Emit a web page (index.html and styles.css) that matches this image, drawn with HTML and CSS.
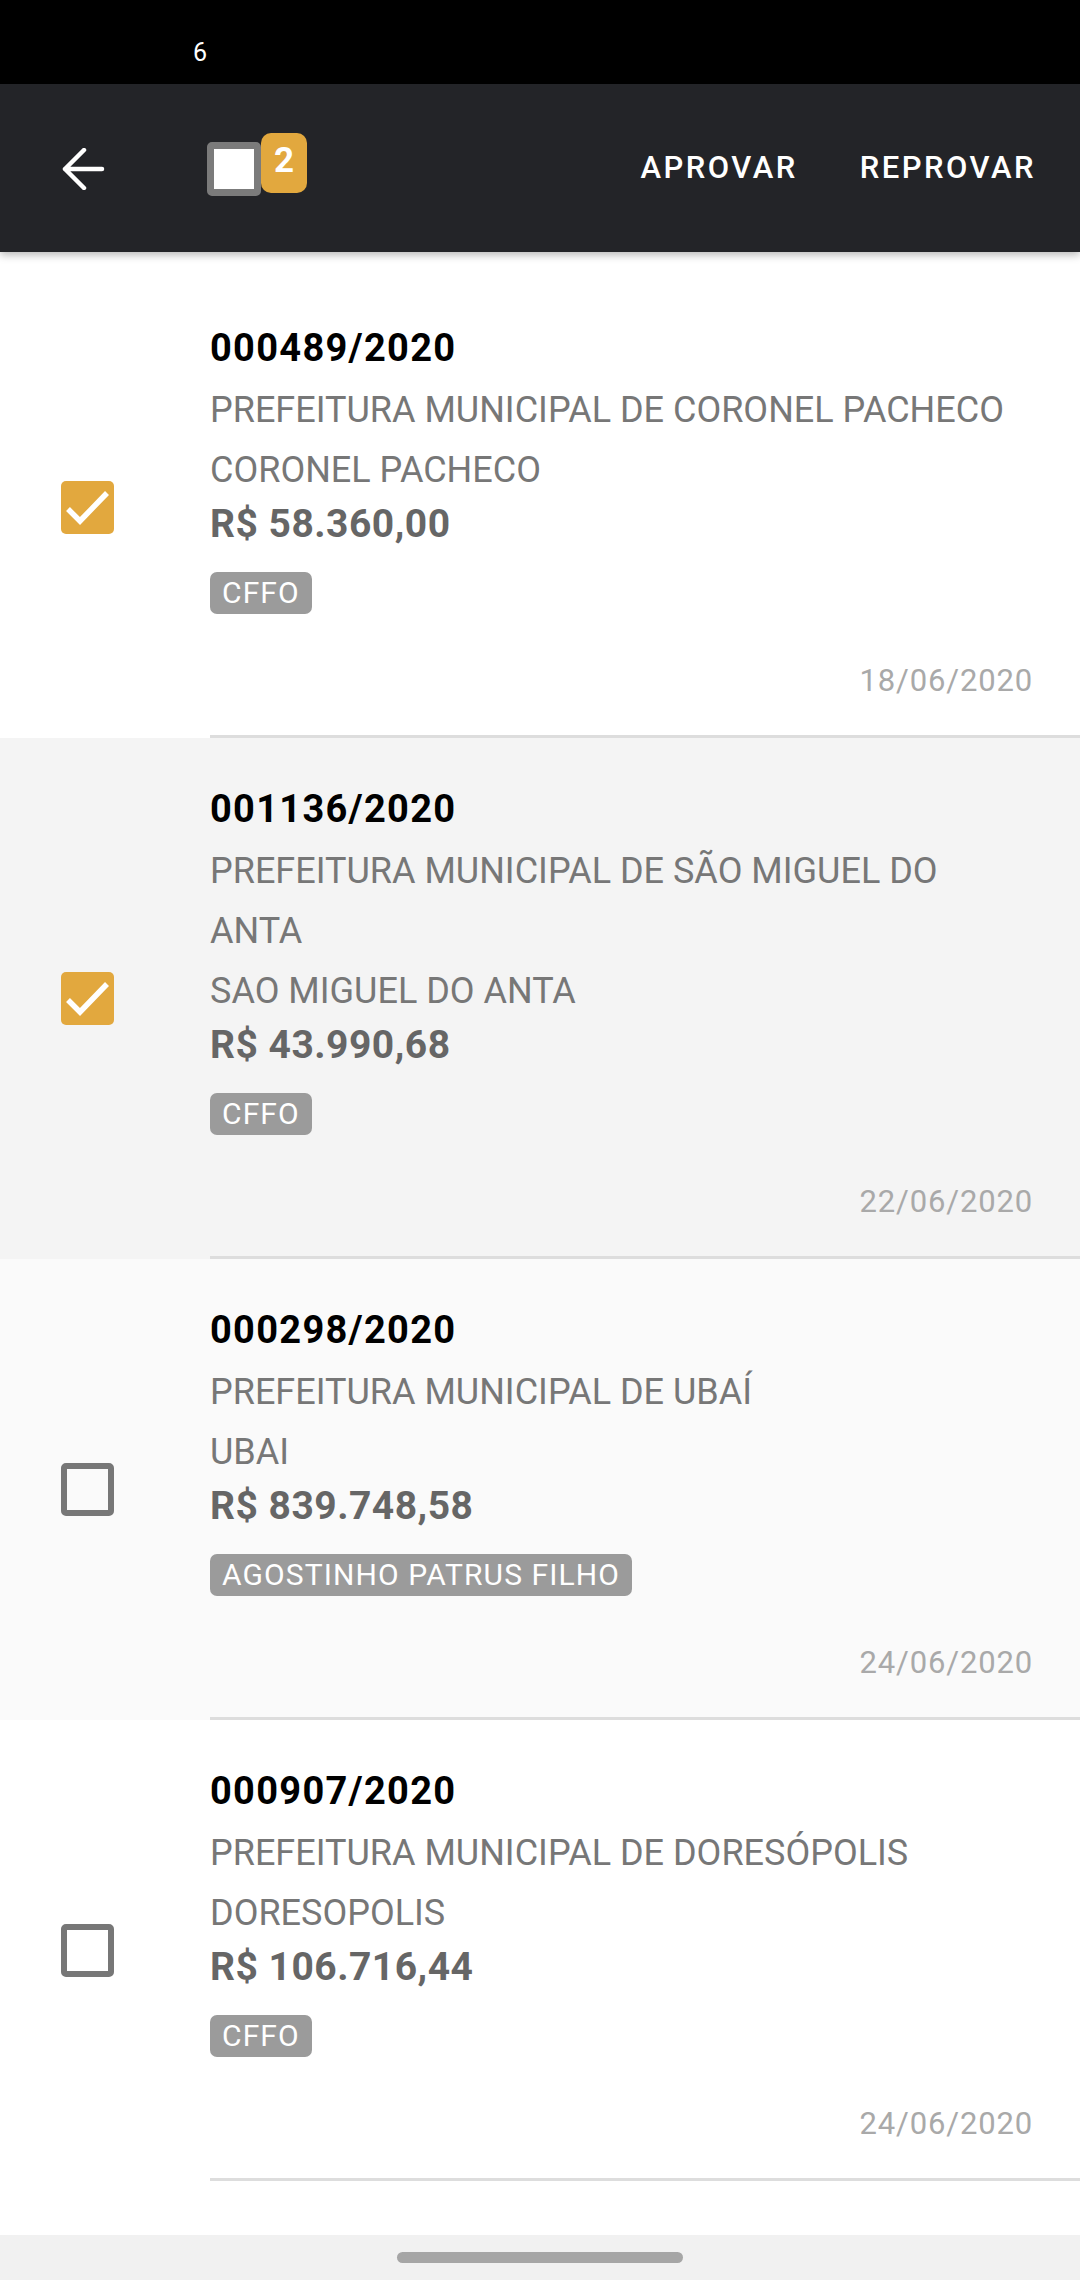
FILE: index.html
```html
<!DOCTYPE html>
<html lang="pt-BR">
<head>
<meta charset="utf-8">
<title>Aprovação</title>
<link rel="stylesheet" href="styles.css">
</head>
<body>
<div class="screen">
  <div class="status"><span class="status-time">6</span></div>
  <header class="toolbar">
    <svg class="back" width="45" height="42" viewBox="0 0 45 42"><path d="M23 2 L4 21 L23 40 M4 21 H41" fill="none" stroke="#fff" stroke-width="4.5" stroke-linecap="round" stroke-linejoin="round"/></svg>
    <div class="select-all">
      <span class="tb-box"></span>
      <span class="tb-badge">2</span>
    </div>
    <div class="spacer"></div>
    <div class="actions">
      <span class="action">APROVAR</span>
      <span class="action">REPROVAR</span>
    </div>
  </header>
  <main class="list">
    <div class="item item-white">
      <div class="check-col"><span class="cb cb-on"><svg width="53" height="53" viewBox="0 0 53 53"><path d="M7 28 L19 40 L46 12" fill="none" stroke="#fff" stroke-width="5.5"/></svg></span></div>
      <div class="content">
        <div class="title">000489/2020</div>
        <div class="org">PREFEITURA MUNICIPAL DE CORONEL PACHECO</div>
        <div class="org">CORONEL PACHECO</div>
        <div class="amount">R$ 58.360,00</div>
        <div class="tag-row"><span class="tag">CFFO</span></div>
        <div class="date">18/06/2020</div>
      </div>
    </div>
    <div class="item item-grey">
      <div class="check-col"><span class="cb cb-on"><svg width="53" height="53" viewBox="0 0 53 53"><path d="M7 28 L19 40 L46 12" fill="none" stroke="#fff" stroke-width="5.5"/></svg></span></div>
      <div class="content">
        <div class="title">001136/2020</div>
        <div class="org">PREFEITURA MUNICIPAL DE SÃO MIGUEL DO ANTA</div>
        <div class="org">SAO MIGUEL DO ANTA</div>
        <div class="amount">R$ 43.990,68</div>
        <div class="tag-row"><span class="tag">CFFO</span></div>
        <div class="date">22/06/2020</div>
      </div>
    </div>
    <div class="item item-light">
      <div class="check-col"><span class="cb cb-off"></span></div>
      <div class="content">
        <div class="title">000298/2020</div>
        <div class="org">PREFEITURA MUNICIPAL DE UBAÍ</div>
        <div class="org">UBAI</div>
        <div class="amount">R$ 839.748,58</div>
        <div class="tag-row"><span class="tag">AGOSTINHO PATRUS FILHO</span></div>
        <div class="date">24/06/2020</div>
      </div>
    </div>
    <div class="item item-white">
      <div class="check-col"><span class="cb cb-off"></span></div>
      <div class="content">
        <div class="title">000907/2020</div>
        <div class="org">PREFEITURA MUNICIPAL DE DORESÓPOLIS</div>
        <div class="org">DORESOPOLIS</div>
        <div class="amount">R$ 106.716,44</div>
        <div class="tag-row"><span class="tag">CFFO</span></div>
        <div class="date">24/06/2020</div>
      </div>
    </div>
  </main>
  <div class="navbar"><span class="pill"></span></div>
</div>
</body>
</html>
```

FILE: styles.css
```css
* { box-sizing: border-box; }
html, body { margin: 0; padding: 0; }
body {
  width: 1080px;
  height: 2280px;
  overflow: hidden;
  background: #fff;
  font-family: Roboto, "Noto Sans", "Liberation Sans", sans-serif;
}
.screen {
  position: relative;
  width: 1080px;
  height: 2280px;
  overflow: hidden;
}
.status {
  height: 84px;
  background: #000;
  color: #fff;
  padding: 33px 0 0 193px;
  font-size: 25px;
  line-height: 40px;
}
.toolbar {
  position: relative;
  z-index: 2;
  height: 168px;
  background: #232428;
  display: flex;
  align-items: center;
  padding: 0 44px 0 61px;
  box-shadow: 0 3px 8px rgba(0,0,0,0.28);
}
.back { display: block; flex: none; margin-top: 2px; }
.select-all {
  display: flex;
  align-items: flex-start;
  margin-left: 101px;
  margin-top: -7px;
  height: 63px;
}
.tb-box {
  display: block;
  width: 54px;
  height: 54px;
  margin-top: 9px;
  border: 7px solid #7b7b7b;
  border-radius: 5px;
  background: #fff;
}
.tb-badge {
  display: block;
  width: 46px;
  height: 60px;
  border-radius: 10px;
  background: #e2a83e;
  color: #fff;
  font-weight: 700;
  font-size: 35px;
  line-height: 56px;
  text-align: center;
}
.spacer { flex: 1; }
.actions { display: flex; gap: 62px; }
.action {
  color: #fff;
  font-size: 31px;
  font-weight: 500;
  letter-spacing: 2.5px;
  line-height: 40px;
}
.list { padding-top: 25px; }
.item { display: flex; align-items: center; }
.item-white { background: #fff; }
.item-grey { background: #f4f4f4; }
.item-light { background: #fafafa; }
.check-col { width: 210px; flex: none; padding-left: 61px; }
.cb {
  display: block;
  width: 53px;
  height: 53px;
  border-radius: 5px;
}
.cb svg { display: block; }
.cb-on { background: #e2a83e; }
.cb-off { border: 6px solid #777; }
.content {
  flex: 1;
  padding: 39px 47px 34px 0;
  border-bottom: 3px solid #dddddd;
}
.title {
  font-size: 38px;
  font-weight: 700;
  letter-spacing: 1.3px;
  color: #000;
  line-height: 64px;
}
.org {
  font-size: 36px;
  color: #777;
  line-height: 60px;
  margin-right: 3px;
}
.amount {
  font-size: 39px;
  font-weight: 700;
  letter-spacing: 0.5px;
  color: #666;
  line-height: 48px;
}
.tag-row { margin-top: 24px; display: flex; }
.tag {
  display: block;
  height: 42px;
  line-height: 42px;
  padding: 0 12px;
  border-radius: 7px;
  background: #9b9b9b;
  color: #fff;
  font-size: 30px;
  letter-spacing: 1.1px;
}
.date {
  margin-top: 47px;
  text-align: right;
  font-size: 31px;
  letter-spacing: 0.85px;
  line-height: 40px;
  color: #a9a9a9;
}
.navbar {
  position: absolute;
  left: 0;
  right: 0;
  bottom: 0;
  height: 45px;
  background: #f1f1f1;
  display: flex;
  justify-content: center;
  padding-top: 17px;
}
.pill {
  display: block;
  width: 286px;
  height: 11px;
  border-radius: 6px;
  background: #a6a6a6;
}
```
